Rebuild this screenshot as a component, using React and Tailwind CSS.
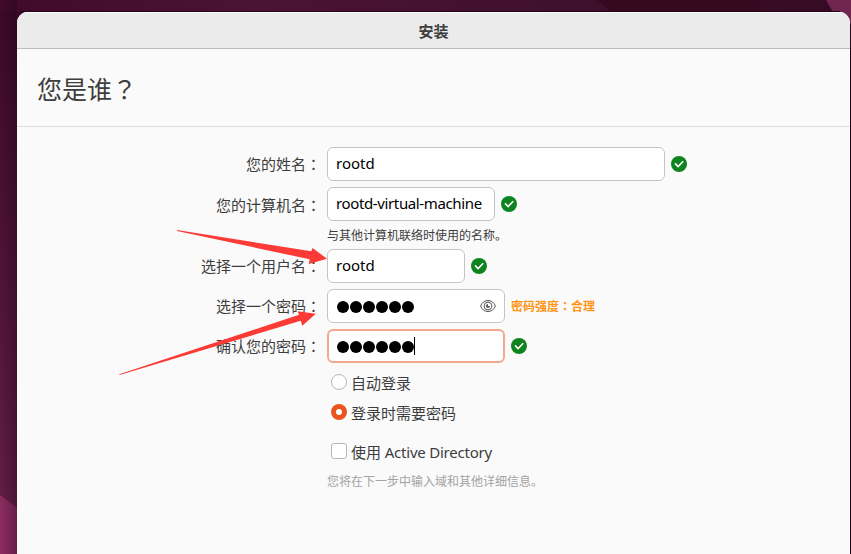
import React from "react";

const PUNCT = 'font-["Noto_Sans_CJK_TC",sans-serif]';

function Check() {
  return (
    <svg className="ml-1.5 h-4 w-4 shrink-0" viewBox="0 0 16 16">
      <circle cx="8" cy="8" r="8" fill="#0e8420" />
      <path d="M4 7.4 7.100 10.600 12.200 5.300" fill="none" stroke="#fff" strokeWidth="1.600" />
    </svg>
  );
}

function Eye() {
  return (
    <svg className="h-4 w-4 shrink-0" viewBox="0 0 16 16" fill="none" stroke="#555">
      <path d="M.6 8C2 4.300 4.700 2.500 8 2.500S14 4.300 15.400 8C14 11.700 11.300 13.500 8 13.500S2 11.700.6 8Z" strokeWidth="1" />
      <circle cx="8" cy="8" r="3.900" strokeWidth="1" />
      <path d="M8 6a2 2 0 1 0 2 2H8Z" fill="#555" stroke="none" />
    </svg>
  );
}

function Row({ label, labelClass = "", children }) {
  return (
    <div className="flex h-[34px] items-center">
      <div className={"w-[304px] shrink-0 text-right text-[15px] leading-[34px] " + labelClass}>
        {label}
        <span className={PUNCT}>：</span>
      </div>
      <div className="ml-1.5 flex items-center">{children}</div>
    </div>
  );
}

function Field({ className, children }) {
  return (
    <div className={"flex h-[34px] items-center rounded-[6px] bg-white text-black " + className}>
      {children}
    </div>
  );
}

const normal = "border border-[#c4c4c4] px-2 ";
const latin = 'pb-0.5 font-["Noto_Sans",sans-serif] text-[15px] ';

function Dots() {
  return (
    <span className="flex h-5 items-center gap-px pl-[0.500px] pt-[2px]">
      {[0, 1, 2, 3, 4, 5].map((n) => (
        <span key={n} className="h-3 w-3 rounded-full bg-black" />
      ))}
    </span>
  );
}

export default function App() {
  return (
    <div className='relative h-[554px] w-[851px] overflow-hidden bg-gradient-to-b from-[#3b0928] to-[#66204a] pl-[17px] pt-3 font-["Noto_Sans_CJK_SC",sans-serif] text-[#3d3d3d]'>
      <svg className="absolute left-0 top-0" width="851" height="554">
        <defs>
          <linearGradient id="top" x1="0" x2="1">
            <stop offset="0" stopColor="#400a2a" />
            <stop offset=".3" stopColor="#4b1433" />
            <stop offset=".7" stopColor="#3e102c" />
            <stop offset="1" stopColor="#350a22" />
          </linearGradient>
          <linearGradient id="edge" x1="0" x2="1">
            <stop offset="0" stopColor="#180010" stopOpacity="0" />
            <stop offset="1" stopColor="#180010" stopOpacity=".3" />
          </linearGradient>
        </defs>
        <rect width="851" height="12" fill="url(#top)" />
        <path d="M597 0 612 12H760V0Z" fill="#360920" />
        <path d="M826 0 834 14V40H851V0Z" fill="#712650" />
        <path d="M0 495 17 508V554H0Z" fill="#8a2c60" />
        <rect width="17" height="554" fill="url(#edge)" />
        <rect x="20" y="11" width="820" height="1" fill="#260318" />
        <rect x="850" y="24" width="1" height="530" fill="#260415" />
      </svg>

      <div className="relative h-[542px] w-[833px] overflow-hidden rounded-t-[11px] bg-[#fafafa]">
        <header className="h-[37px] border-b border-t border-b-[#bcbcbc] border-t-white bg-[#ebebeb] text-center text-[15px] font-bold leading-[35px]">
          安装
        </header>
        <h1 className="h-[78px] border-b border-[#dedede] pl-5 text-[25px] leading-[78px]">
          您是谁<span className={PUNCT}>？</span>
        </h1>

        <main className="pt-5">
          <Row label="您的姓名">
            <Field className={normal + latin + "w-[338px]"}>rootd</Field>
            <Check />
          </Row>
          <div className="mt-1.5">
            <Row label="您的计算机名" labelClass="pt-0.5">
              <Field className={normal + latin + "w-[168px] whitespace-nowrap tracking-[-0.37px]"}>
                rootd-virtual-machine
              </Field>
              <Check />
            </Row>
          </div>
          <p className="h-7 pl-[310px] text-xs leading-[27px]">与其他计算机联络时使用的名称。</p>
          <div className="flex flex-col gap-1.5">
            <Row label="选择一个用户名">
              <Field className={normal + latin + "w-[138px]"}>rootd</Field>
              <Check />
            </Row>
            <Row label="选择一个密码">
              <Field className={normal + "w-[178px] justify-between"}>
                <Dots />
                <Eye />
              </Field>
              <span className="ml-1.5 text-xs font-bold text-[#ff9514]">
                密码强度<span className={PUNCT}>：</span>合理
              </span>
            </Row>
            <Row label="确认您的密码">
              <Field className="w-[178px] border-2 border-[#f2a98f] pl-[7px]">
                <Dots />
                <span className="ml-[0.500px] h-[18px] w-px bg-black" />
              </Field>
              <Check />
            </Row>
          </div>

          <div className="pl-[314px] text-[15px]">
            <div className="mt-[5px] flex h-[30px] items-center">
              <span className="mb-0.5 h-4 w-4 rounded-full border border-[#b8b8b8] bg-white" />
              <span className="ml-1">自动登录</span>
            </div>
            <div className="flex h-[30px] items-center">
              <span className="mb-0.5 flex h-4 w-4 items-center justify-center rounded-full bg-[#e95420]">
                <span className="h-1.5 w-1.5 rounded-full bg-white" />
              </span>
              <span className="ml-1">登录时需要密码</span>
            </div>
            <div className="mt-[9px] flex h-[30px] items-center">
              <span className="mb-0.5 h-4 w-4 rounded-[3px] border border-[#b8b8b8] bg-white" />
              <span className="ml-1 whitespace-pre">
                使用<span className='font-["Noto_Sans",sans-serif] tracking-[-0.22px]'> Active Directory</span>
              </span>
            </div>
          </div>
          <p className="pl-[310px] text-xs leading-7 text-[#a3a3a3]">您将在下一步中输入域和其他详细信息。</p>
        </main>
      </div>

      <svg className="absolute left-0 top-0" width="851" height="554" fill="#fc3a36">
        <path d="M177 230 311.300 251.300 312.500 248 327 258.700 308.800 264 309.700 259.300 177 231Z" />
        <path d="M119.300 374.200 299 314.800 297.600 311.200 315.800 313.700 302.300 325.800 300.700 320.800 119.500 375Z" />
      </svg>
    </div>
  );
}
